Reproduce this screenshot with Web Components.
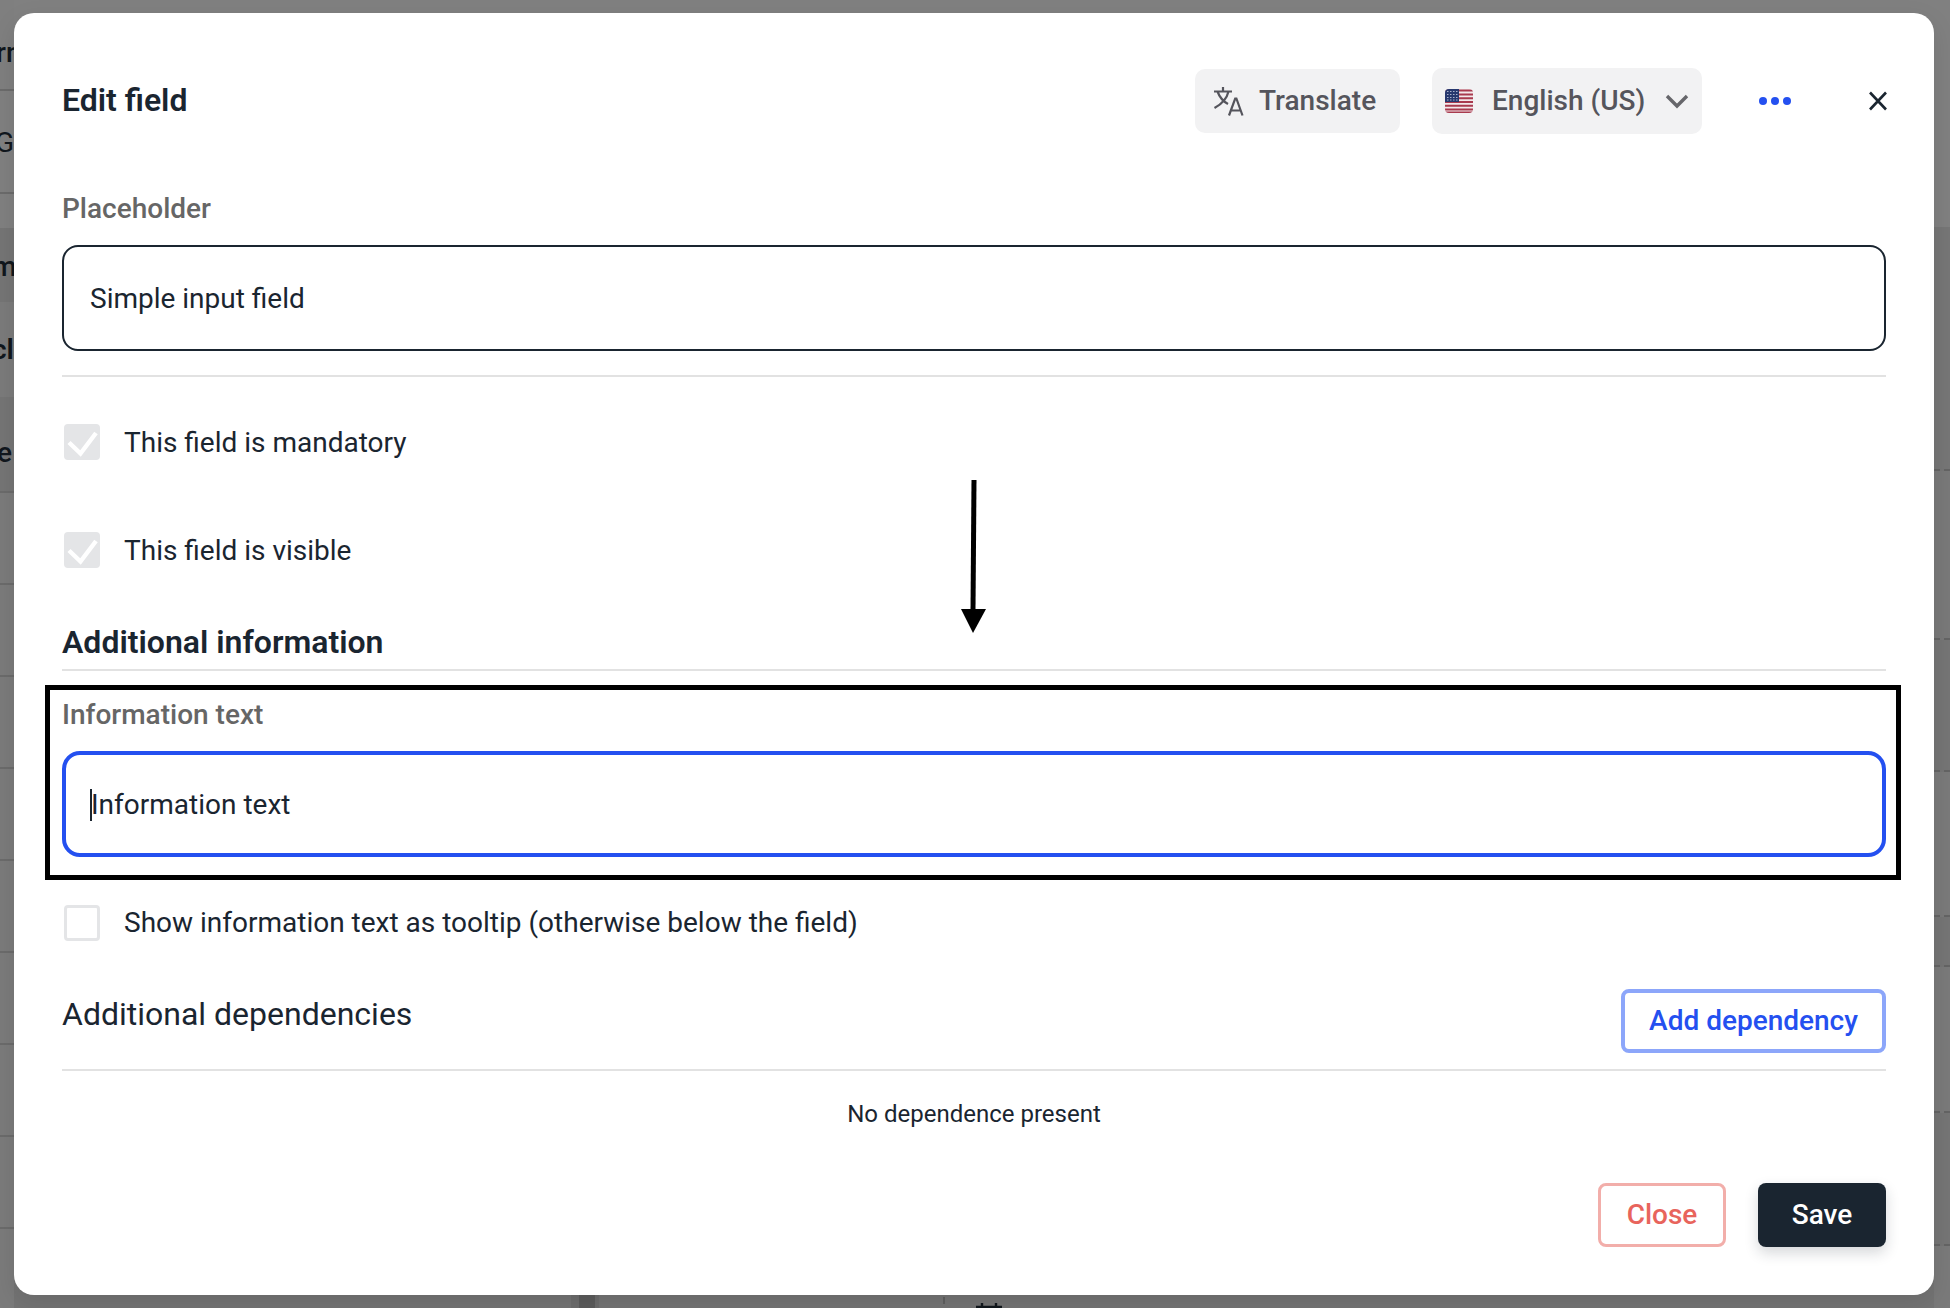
<!DOCTYPE html>
<html>
<head>
<meta charset="utf-8">
<title>Edit field</title>
<style>
  html, body { margin: 0; height: 100%; }
  body { background: #808080; font-family: Roboto, "Liberation Sans", sans-serif; color: #1a2530; overflow: hidden; }
</style>
</head>
<body>
<page-backdrop></page-backdrop>
<edit-modal></edit-modal>

<script>
class PageBackdrop extends HTMLElement {
  constructor() {
    super();
    this.shadowDOM = this.attachShadow({ mode: "open" });
  }

  connectedCallback() {
    // height, background, letters, top padding, left shift, weight, line under the row
    const left = [
      [91, "#7f7f7f", "rn", 36, -4, 500, 1],
      [103, "#808080", "G", 35, -5, 400, 1],
      [34, "#808080", "", 0, 0, 400, 0],
      [74, "#757575", "m", 22, -8, 500, 0],
      [95, "#7b7b7b", "cla", 31, -8, 600, 0],
      [96, "#757575", "e", 39, -3, 500, 1]
    ];
    let leftHtml = "";
    left.forEach(r => {
      leftHtml += `<div class="row ${r[6] ? "line" : ""}" style="height:${r[0]}px;background:${r[1]};padding-top:${r[3]}px"><b style="margin-left:${r[4]}px;font-weight:${r[5]}">${r[2]}</b></div>`;
    });
    for (let i = 0; i < 9; i++) leftHtml += `<div class="row line" style="height:92px;background:#7b7b7b"></div>`;

    const right = [[227, "#808080"], [244, "#767676"], [169, "#797979"], [132, "#757575"], [145, "#7a7a7a"], [50, "#757575"], [146, "#7a7a7a"], [133, "#757575"], [62, "#7a7a7a"]];
    let rightHtml = "";
    right.forEach((r, i) => {
      rightHtml += `<div class="cell ${i > 0 && i < 8 ? "dash" : ""}" style="height:${r[0]}px;background:${r[1]}"></div>`;
    });

    this.shadowDOM.innerHTML = `
      <style>
        :host { display: flex; justify-content: space-between; width: 100%; height: 100%; overflow: hidden; position: relative; background: linear-gradient(#808080 600px, #747474 1296px); }
        .col { overflow: hidden; flex: none; }
        .left { width: 14px; }
        .right { width: 16px; }
        .row { box-sizing: border-box; overflow: hidden; }
        .row.line { border-bottom: 2px solid #6b6b6b; }
        b { display: block; font: 500 28px/34px Roboto, sans-serif; color: #11171d; white-space: nowrap; }
        .cell { box-sizing: border-box; }
        .cell.dash { border-bottom: 2px dashed #646464; }
        .col-band { position: absolute; left: 579px; bottom: 0; width: 16px; height: 14px; background: #5c5c5c; box-shadow: -8px 0 0 #6d6d6d, 4px 0 0 #6d6d6d; }
        .tick { position: absolute; left: 943px; top: 1297px; width: 2px; height: 7px; background: #5f5f5f; }
        .cal { position: absolute; left: 975px; top: 1303px; width: 28px; height: 5px; }
      </style>
      <div class="col left">${leftHtml}</div>
      <div class="col right">${rightHtml}</div>
      <div class="col-band"></div>
      <div class="tick"></div>
      <svg class="cal" viewBox="0 0 28 5"><path d="M7 0V5M21 0V5M1 4H27" stroke="#11171d" stroke-width="2.4" fill="none"/></svg>
    `;
  }
}

class FieldLabel extends HTMLElement {
  constructor() {
    super();
    this.attachShadow({ mode: "open" }).innerHTML = `
      <style>
        :host { display: block; font: 500 28px/32px Roboto, sans-serif; color: #666666; }
      </style>
      <slot></slot>
    `;
  }
}

class TextField extends HTMLElement {
  constructor() {
    super();
    this.attachShadow({ mode: "open" });
  }

  connectedCallback() {
    const focused = this.hasAttribute("focused");
    this.shadowRoot.innerHTML = `
      <style>
        :host { display: block; }
        .box {
          box-sizing: border-box; height: 106px; display: flex; align-items: center;
          padding: 2px 26px 0; background: #fff; color: #1a2530;
          font: 400 28px/32px Roboto, sans-serif;
          border: 2px solid #1a2530; border-radius: 16px;
        }
        .box.focused { border: 4px solid #2450f0; padding: 2px 24px 0; border-radius: 18px; }
        .caret { width: 2px; height: 32px; background: #1a2530; margin-right: -1px; }
      </style>
      <div class="box ${focused ? "focused" : ""}">${focused ? '<span class="caret"></span>' : ""}<slot></slot></div>
    `;
  }
}

class CheckRow extends HTMLElement {
  constructor() {
    super();
    this.attachShadow({ mode: "open" });
  }

  connectedCallback() {
    const checked = this.hasAttribute("checked");
    this.shadowRoot.innerHTML = `
      <style>
        :host { display: flex; align-items: center; gap: 24px; padding-left: 2px; font: 400 28px/36px Roboto, sans-serif; color: #1a2530; }
        .tick {
          box-sizing: border-box; width: 36px; height: 36px; border-radius: 4px;
          background: #e4e5e7; display: flex;
        }
        .tick.off { background: #fff; border: 3px solid #e4e5e7; }
        .label { padding-top: var(--text-shift, 0px); margin-bottom: calc(var(--text-shift, 0px) * -1); }
      </style>
      <span class="tick ${checked ? "" : "off"}">
        ${checked ? '<svg width="36" height="36" viewBox="0 0 36 36"><path d="M5 18.5 L16.5 29.5 L32 9" fill="none" stroke="#fff" stroke-width="4.4"/></svg>' : ""}
      </span>
      <span class="label"><slot></slot></span>
    `;
  }
}

class UiButton extends HTMLElement {
  constructor() {
    super();
    this.attachShadow({ mode: "open" }).innerHTML = `
      <style>
        :host {
          display: flex; box-sizing: border-box; height: 64px; align-items: center; justify-content: center;
          border-radius: 8px; font: 500 28px/32px Roboto, sans-serif;
        }
        :host([kind="outline"]) { width: 265px; color: #2450f0; border: 4px solid #8ca6fa; }
        :host([kind="danger"]) { width: 128px; color: #e8645c; border: 3px solid #f2aeaa; }
        :host([kind="dark"]) { width: 128px; color: #fff; background: #1a2530; box-shadow: 0 6px 14px rgba(26,37,48,.18); }
      </style>
      <slot></slot>
    `;
  }
}

class HeaderBar extends HTMLElement {
  constructor() {
    super();
    this.attachShadow({ mode: "open" }).innerHTML = `
      <style>
        :host { display: flex; align-items: center; height: 66px; }
        h2 { flex: 1; margin: -2px 0 0; font: 600 32px/36px Roboto, sans-serif; color: #1a2530; }
        .pill {
          display: flex; align-items: center; box-sizing: border-box; border-radius: 10px;
          background: #f2f2f3; color: #55555c; font: 500 28px/32px Roboto, sans-serif;
        }
        .translate { width: 205px; height: 64px; padding-left: 17px; gap: 15px; margin-right: 32px; }
        .lang { width: 270px; height: 66px; padding-left: 13px; gap: 19px; }
        .lang svg.chev { margin-left: 1px; }
        .more { margin-left: 56px; margin-right: 76px; display: flex; }
        .close { margin-right: -2px; display: flex; }
      </style>
      <h2>Edit field</h2>
      <div class="pill translate">
        <svg width="32" height="32" viewBox="0 0 32 32" fill="none" stroke="#55555c" stroke-width="2.2">
          <path d="M2 6.5H20M11 2v4.5M16.5 6.5C15 13 10 19 2.5 23M5.5 6.5C7.5 12 11.5 16.5 16 19"/>
          <path d="M17 30.5L23.2 13.5h1.2L30.5 30.5M19.2 25.5h9.2"/>
        </svg>
        Translate
      </div>
      <div class="pill lang">
        <svg width="28" height="24" viewBox="0 0 28 24">
          <defs><clipPath id="flag"><rect width="28" height="24" rx="4"/></clipPath></defs>
          <g clip-path="url(#flag)">
            <rect width="28" height="24" fill="#f3e8ea"/>
            <path d="M0 1.5H28M0 5.5H28M0 9.2H28M0 13H28M0 16.8H28M0 20.4H28M0 23.5H28" stroke="#a83a4e" stroke-width="2"/>
            <rect width="14" height="13" fill="#27386e"/>
            <path d="M2 2.5H13M2 5.5H13M2 8.5H13M2 11H13" stroke="#aab2cc" stroke-width="1.1" stroke-dasharray="1.5 1.5"/>
          </g>
        </svg>
        English (US)
        <svg class="chev" width="24" height="16" viewBox="0 0 24 16"><path d="M2 3 L12 13 L22 3" fill="none" stroke="#66666a" stroke-width="3.4"/></svg>
      </div>
      <div class="more">
        <svg width="34" height="10" viewBox="0 0 34 10" fill="#2450f0"><circle cx="5" cy="5" r="4"/><circle cx="17" cy="5" r="4"/><circle cx="29" cy="5" r="4"/></svg>
      </div>
      <div class="close">
        <svg width="20" height="20" viewBox="0 0 20 20"><path d="M2 1.5 L18 18.5 M18 1.5 L2 18.5" stroke="#1a2530" stroke-width="2.6" fill="none"/></svg>
      </div>
    `;
  }
}

class EditModal extends HTMLElement {
  constructor() {
    super();
    this.attachShadow({ mode: "open" }).innerHTML = `
      <style>
        :host {
          position: absolute; left: 14px; top: 13px; width: 1920px; height: 1282px;
          box-sizing: border-box; padding: 55px 48px 0; background: #fff; border-radius: 20px;
          display: flex; flex-direction: column; box-shadow: 0 8px 24px rgba(0,0,0,.1);
        }
        hr { margin: 0; border: 0; height: 2px; background: #e2e2e2; }
        field-label.first { margin-top: 59px; margin-bottom: 20px; }
        .d1 { margin-top: 24px; }
        .c1 { margin-top: 47px; --text-shift: 1px; }
        .c2 { margin-top: 72px; --text-shift: 1px; }
        h3 { margin: 56px 0 0; font: 600 32px/36px Roboto, sans-serif; color: #1a2530; }
        .d2 { margin-top: 9px; }
        .framed {
          position: relative; margin: 14px -15px 0 -17px; padding: 9px 10px 18px 12px; border: 5px solid #000;
          display: flex; flex-direction: column; gap: 20px;
        }
        .c3 { margin-top: 25px; }
        .deps { display: flex; justify-content: space-between; align-items: flex-start; margin-top: 48px; }
        .deps span { font: 400 32px/40px Roboto, sans-serif; color: #1a2530; margin-top: 5px; }
        .d3 { margin-top: 16px; }
        .none { text-align: center; font: 400 24px/32px Roboto, sans-serif; color: #1a2530; margin-top: 27px; }
        .foot { display: flex; justify-content: flex-end; gap: 32px; margin-top: 53px; }
        svg.arrow { position: absolute; left: 945px; top: 467px; }
      </style>
      <header-bar></header-bar>
      <field-label class="first">Placeholder</field-label>
      <text-field>Simple input field</text-field>
      <hr class="d1">
      <check-row class="c1" checked>This field is mandatory</check-row>
      <check-row class="c2" checked>This field is visible</check-row>
      <h3>Additional information</h3>
      <hr class="d2">
      <div class="framed">
        <field-label>Information text</field-label>
        <text-field focused>Information text</text-field>
      </div>
      <check-row class="c3">Show information text as tooltip (otherwise below the field)</check-row>
      <div class="deps">
        <span>Additional dependencies</span>
        <ui-button kind="outline">Add dependency</ui-button>
      </div>
      <hr class="d3">
      <div class="none">No dependence present</div>
      <div class="foot">
        <ui-button kind="danger">Close</ui-button>
        <ui-button kind="dark">Save</ui-button>
      </div>
      <svg class="arrow" width="30" height="156" viewBox="0 0 30 156">
        <path d="M15 0 L14 130" stroke="#000" stroke-width="5" fill="none"/>
        <path d="M2 129 H27 L14 153 Z" fill="#000"/>
      </svg>
    `;
  }
}

customElements.define("page-backdrop", PageBackdrop);
customElements.define("field-label", FieldLabel);
customElements.define("text-field", TextField);
customElements.define("check-row", CheckRow);
customElements.define("ui-button", UiButton);
customElements.define("header-bar", HeaderBar);
customElements.define("edit-modal", EditModal);
</script>
</body>
</html>
